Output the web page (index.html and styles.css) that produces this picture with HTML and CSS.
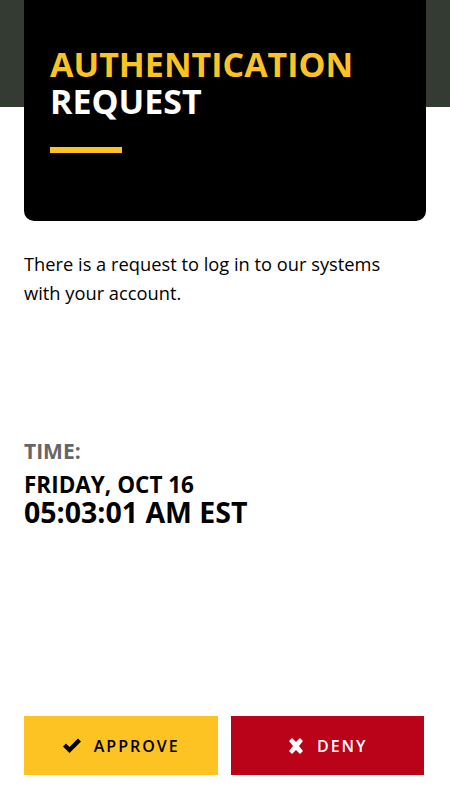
FILE: index.html
```html
<!DOCTYPE html>
<html lang="en">
<head>
    <meta charset="UTF-8">
    <meta name="viewport" content="width=device-width, initial-scale=1.0">
    <title>Authentication Request</title>
    <link rel="stylesheet" href="styles.css">
</head>
<body>
    <div class="page">
        <div class="header">
            <div class="card">
                <h1 class="title">
                    <span class="title-accent">AUTHENTICATION</span>
                    <span class="title-main">REQUEST</span>
                </h1>
                <div class="title-bar"></div>
            </div>
        </div>

        <div class="content">
            <p class="message">There is a request to log in to our systems with your account.</p>

            <div class="time">
                <div class="time-label">TIME:</div>
                <div class="time-date">FRIDAY, OCT 16</div>
                <div class="time-clock">05:03:01 AM EST</div>
            </div>
        </div>

        <div class="actions">
            <button class="btn btn-approve">
                <svg class="btn-icon" width="20" height="16" viewBox="0 0 20 16">
                    <path d="M1 8.5 L4 5.5 L7.5 9 L16 0.5 L19 3.5 L7.5 15 Z" fill="#000"/>
                </svg>
                APPROVE
            </button>
            <button class="btn btn-deny">
                <svg class="btn-icon" width="18" height="16" viewBox="0 0 18 16">
                    <path d="M2 3 L5 0 L9 4 L13 0 L16 3 L12 8 L16 13 L13 16 L9 12 L5 16 L2 13 L6 8 Z" fill="#fff"/>
                </svg>
                DENY
            </button>
        </div>
    </div>
</body>
</html>
```

FILE: styles.css
```css
html, body {
    margin: 0;
    height: 100%;
}
body {
    font-family: "Open Sans", "Noto Sans", sans-serif;
    color: #000;
    background-color: #fff;
}
.page {
    display: flex;
    flex-direction: column;
    min-height: 100vh;
    box-sizing: border-box;
    padding-bottom: 25px;
}
.header {
    background: linear-gradient(#343b33 0, #343b33 107px, #fff 107px);
    padding: 0 24px;
}
.card {
    background-color: #000;
    height: 221px;
    box-sizing: border-box;
    padding: 46px 26px 0;
    border-radius: 0 0 10px 10px;
}
.title {
    margin: 0;
    font-size: 34px;
    line-height: 37px;
    font-weight: 700;
}
.title span {
    display: block;
}
.title-accent {
    color: #fdc323;
}
.title-main {
    color: #fff;
}
.title-bar {
    width: 72px;
    height: 6px;
    background-color: #fdc323;
    margin-top: 27px;
}
.content {
    padding: 0 24px;
}
.message {
    margin: 28px 0 0;
    font-size: 18.3px;
    line-height: 29px;
    padding-right: 40px;
}
.time {
    margin-top: 131px;
}
.time-label {
    font-size: 21px;
    font-weight: 700;
    color: #666;
    line-height: 26px;
}
.time-date {
    margin-top: 8px;
    font-size: 22.5px;
    font-weight: 700;
    line-height: 26px;
}
.time-clock {
    font-size: 28.5px;
    font-weight: 700;
    line-height: 28px;
}
.actions {
    margin-top: auto;
    display: flex;
    gap: 13px;
    padding: 0 26px 0 24px;
}
.btn {
    flex: 1;
    height: 59px;
    border: none;
    display: flex;
    align-items: center;
    justify-content: center;
    gap: 12px;
    font-family: inherit;
    font-size: 16px;
    font-weight: 600;
    letter-spacing: 2px;
    cursor: pointer;
}
.btn-approve {
    background-color: #fdc323;
    color: #000;
}
.btn-deny {
    background-color: #ba0319;
    color: #fff;
}
```
